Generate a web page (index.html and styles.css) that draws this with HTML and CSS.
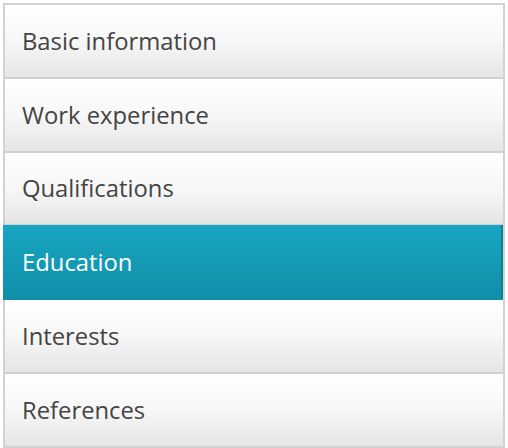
FILE: index.html
```html
<!DOCTYPE html>
<html>
<head>
<meta charset="utf-8">
<link rel="stylesheet" href="styles.css">
</head>
<body>
<ul class="menu">
  <li class="item">Basic information</li>
  <li class="item">Work experience</li>
  <li class="item">Qualifications</li>
  <li class="item active">Education</li>
  <li class="item">Interests</li>
  <li class="item">References</li>
</ul>
</body>
</html>
```
FILE: styles.css
```css
html, body {
  margin: 0;
  padding: 0;
  background: #fff;
}
body {
  padding: 3px;
}
.menu {
  list-style: none;
  margin: 0;
  padding: 0;
  width: 498px;
  border: 2px solid #d2d2d2;
  font-family: "Open Sans", sans-serif;
  display: flex;
  flex-direction: column;
}
.item {
  height: 71.75px;
  display: flex;
  align-items: center;
  padding-left: 17px;
  font-size: 23.8px;
  color: #444444;
  background: linear-gradient(#ffffff 0%, #f7f7f7 50%, #e5e5e5 100%);
  border-bottom: 2px solid #d0d0d0;
}
.item:last-child {
  border-bottom: none;
}
.item.active {
  color: #ffffff;
  background: linear-gradient(#17a6c2 0%, #128ea9 100%);
  border-bottom: 2px solid #138ea8;
  box-shadow: inset -2px 0 0 #0f7f97;
  margin-top: -1px;
  margin-left: -2px;
  padding-left: 19px;
  height: 72.75px;
}
```
